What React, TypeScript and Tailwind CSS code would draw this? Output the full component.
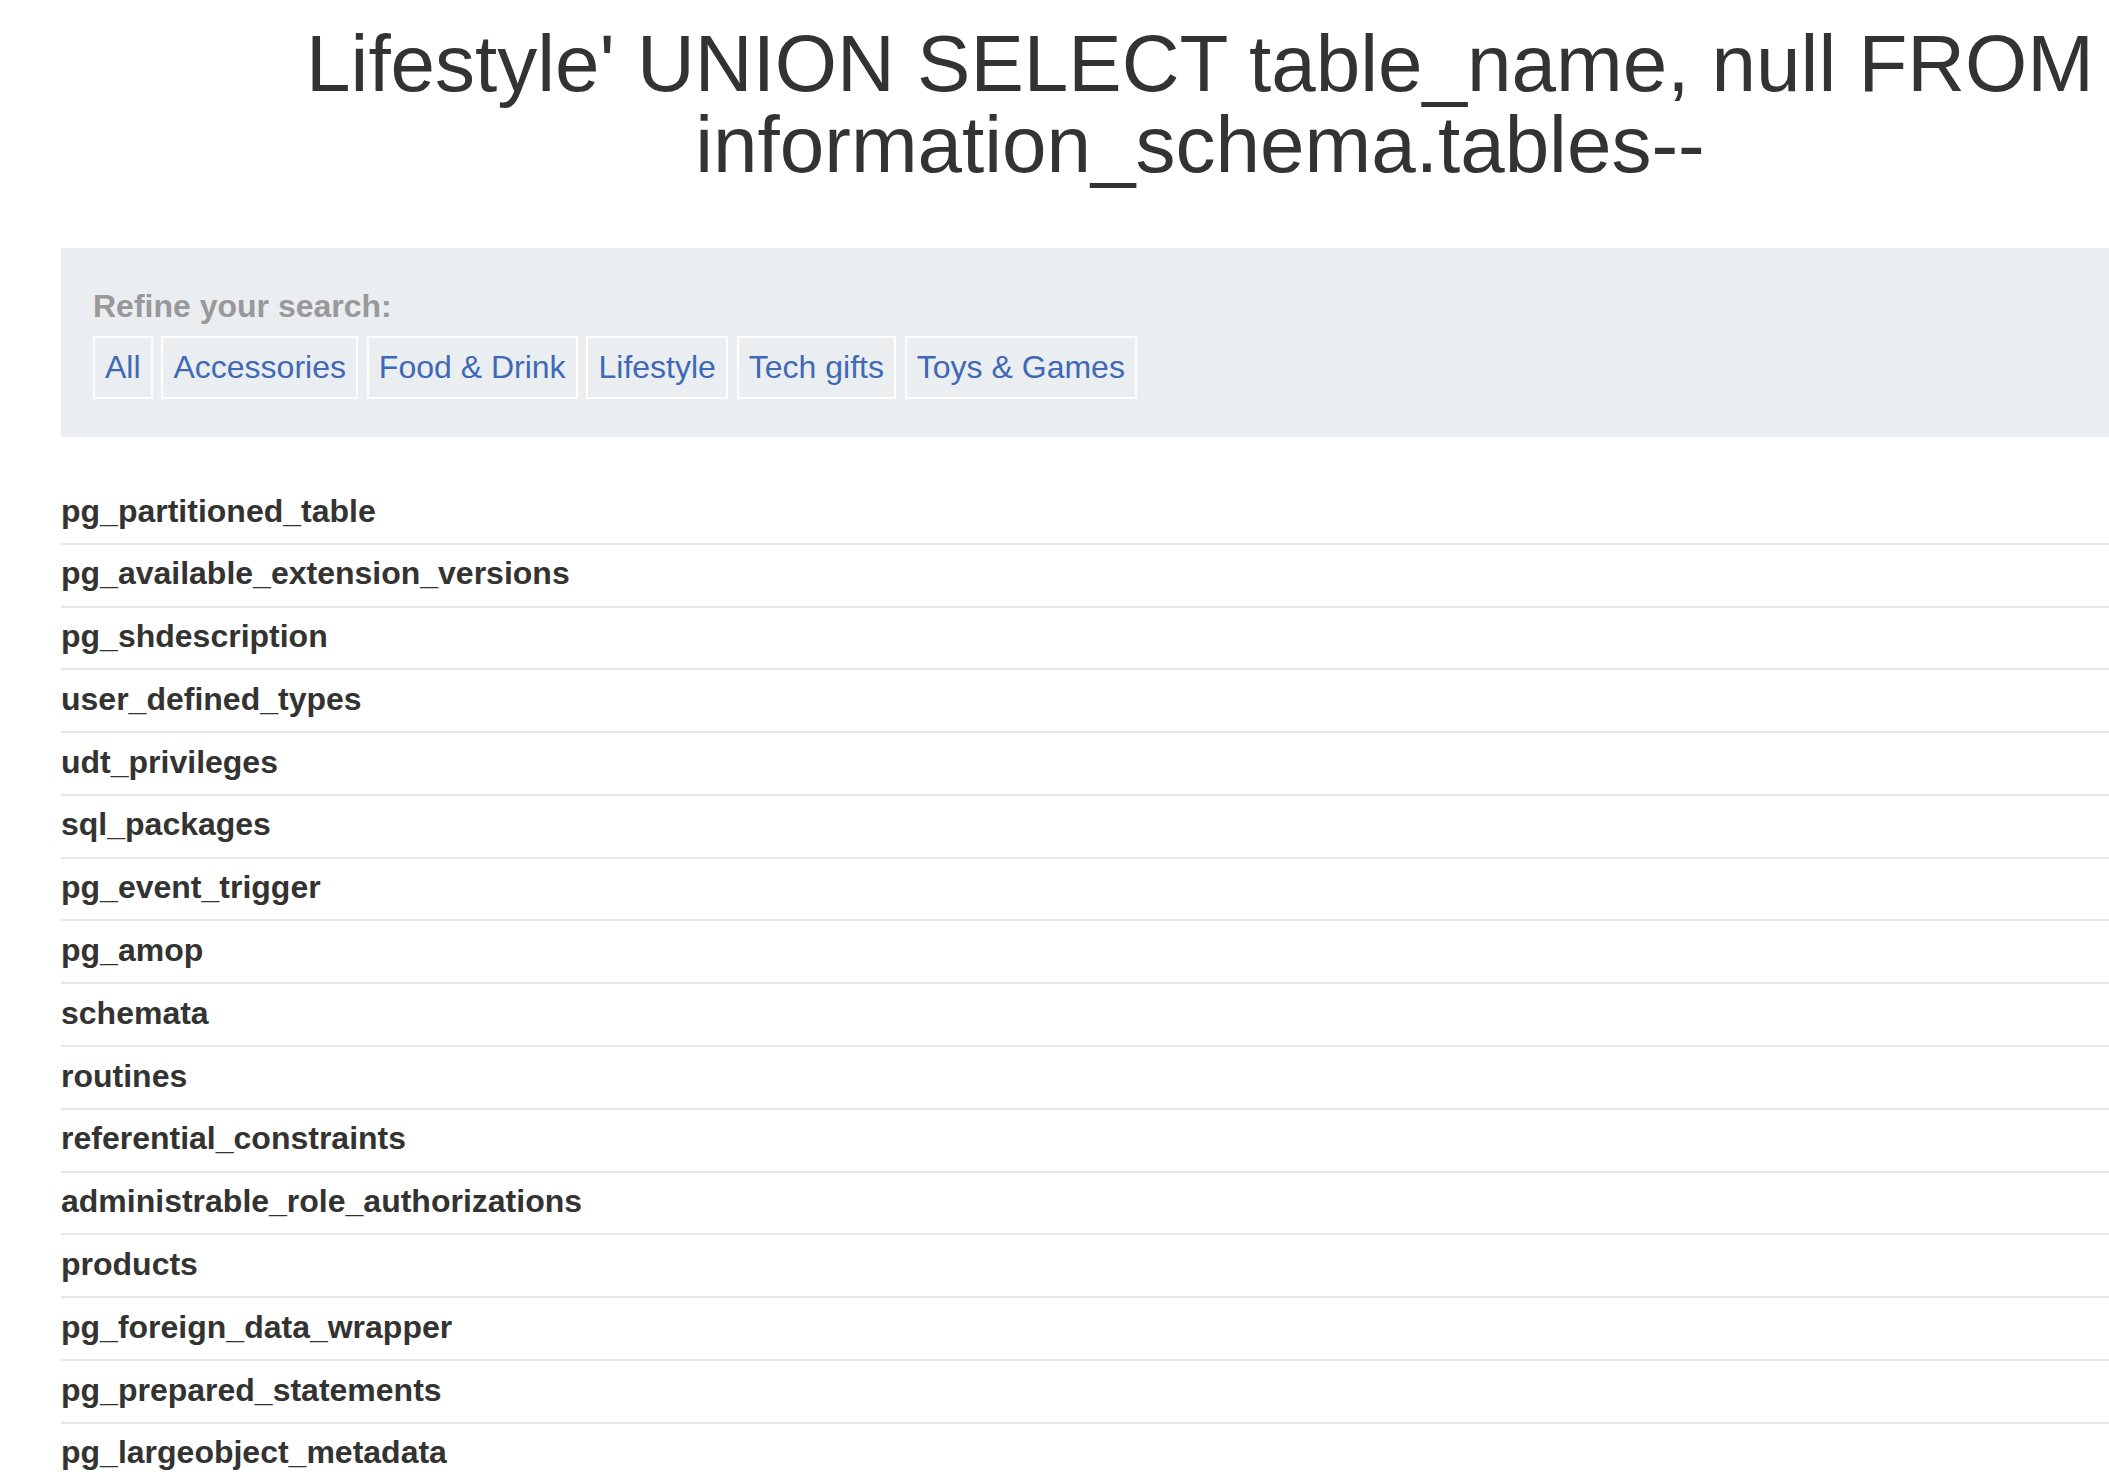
import React from "react";

const categories = ["All", "Accessories", "Food & Drink", "Lifestyle", "Tech gifts", "Toys & Games"];

const rows = [
  "pg_partitioned_table",
  "pg_available_extension_versions",
  "pg_shdescription",
  "user_defined_types",
  "udt_privileges",
  "sql_packages",
  "pg_event_trigger",
  "pg_amop",
  "schemata",
  "routines",
  "referential_constraints",
  "administrable_role_authorizations",
  "products",
  "pg_foreign_data_wrapper",
  "pg_prepared_statements",
  "pg_largeobject_metadata",
  "sql_implementation_info",
  "collations",
];

export default function App() {
  return (
    <div
      className="w-full h-[1472px] overflow-hidden bg-white text-[#333332]"
      style={{ fontFamily: '"Liberation Sans", Arial, sans-serif' }}
    >
      <div className="ml-[61px] w-[2278px]">
        <h1 className="pt-[22.5px] text-center text-[80px] leading-[81px] font-normal text-[#333332]">
          Lifestyle' UNION SELECT table_name, null FROM information_schema.tables--
        </h1>

        <section className="mt-[63.5px] bg-[#ebeef1] px-[32px] pt-[37.5px] pb-[38.7px]">
          <div className="text-[32px] leading-[40px] font-bold text-[#999999]">Refine your search:</div>
          <div className="mt-[10.3px] flex gap-[8.9px]">
            {categories.map((c) => (
              <a
                key={c}
                href="#"
                className="block border-2 border-white px-[10px] py-[8px] text-[32px] leading-[43px] text-[#3f69b6] no-underline"
              >
                {c}
              </a>
            ))}
          </div>
        </section>

        <table className="mt-[44.5px] w-full border-collapse">
          <tbody>
            {rows.map((r) => (
              <tr key={r} className="border-b-2 border-[#e6e6e6]">
                <th className="text-left font-bold text-[32px] leading-[40px] pt-[8.6px] pb-[12.2px] px-0 text-[#333332]">
                  {r}
                </th>
              </tr>
            ))}
          </tbody>
        </table>
      </div>
    </div>
  );
}
